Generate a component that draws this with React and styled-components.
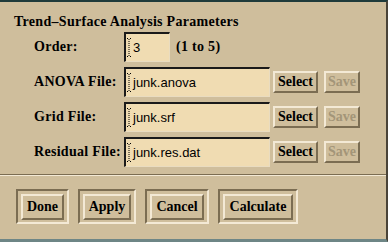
import React from 'react';
import styled, { createGlobalStyle } from 'styled-components';

const GlobalStyle = createGlobalStyle`
  html, body {
    margin: 0;
    padding: 0;
    background: #cfbe9c;
  }
`;

const TAN = '#cfbe9c';
const LIGHT = '#f3e9d5';
const DARK = '#7b6d52';

const Window = styled.div`
  width: 388px;
  height: 242px;
  box-sizing: border-box;
  background: ${TAN};
  border-top: 2px solid #1f3b3b;
  border-right: 2px solid #4a4438;
  border-bottom: 3px solid #6e8686;
  display: flex;
  flex-direction: column;
  font-family: "Liberation Serif", "Times New Roman", serif;
  letter-spacing: 0.3px;
  color: #000;
`;

const Title = styled.div`
  padding: 12px 0 2px 14px;
  height: 16px;
  line-height: 16px;
  font-size: 14px;
  font-weight: bold;
`;

const Rows = styled.div`
  display: flex;
  flex-direction: column;
  gap: 5px;
  padding-left: 34px;
`;

const Row = styled.div`
  display: flex;
  align-items: center;
  height: 30px;
`;

const Label = styled.div`
  width: 90px;
  font-size: 14px;
  font-weight: bold;
  white-space: nowrap;
`;

const Field = styled.div`
  box-sizing: border-box;
  width: ${(p) => p.$width}px;
  height: 30px;
  background: #f0dcb2;
  border-style: solid;
  border-width: 2px 1px 1px 2px;
  border-color: #1a1a1a #e9dcc0 #e9dcc0 #1a1a1a;
  display: flex;
  align-items: center;
  padding-left: 1px;
  font-family: "Liberation Sans", Arial, sans-serif;
  font-size: 13px;
  letter-spacing: 0;
`;

const Caret = styled.svg`
  width: 5px;
  height: 19px;
  margin-right: 1px;
  flex: none;
`;

const Hint = styled.span`
  margin-left: 6px;
  font-size: 14px;
  font-weight: bold;
`;

const SmallButton = styled.div`
  box-sizing: border-box;
  width: ${(p) => p.$width}px;
  height: 22px;
  margin-left: ${(p) => p.$gap}px;
  border: 2px solid;
  border-color: ${LIGHT} ${DARK} ${DARK} ${LIGHT};
  display: flex;
  align-items: center;
  justify-content: center;
  font-size: 14px;
  font-weight: bold;
  letter-spacing: 0;
  color: ${(p) => (p.$disabled ? '#a39578' : '#000')};
`;

const Separator = styled.div`
  margin-top: 7px;
  height: 0;
  border-top: 1px solid ${DARK};
  border-bottom: 1px solid ${LIGHT};
`;

const ButtonBar = styled.div`
  display: flex;
  gap: 9px;
  margin-top: 13px;
  padding-left: 16px;
`;

const Frame = styled.div`
  box-sizing: border-box;
  width: ${(p) => p.$width}px;
  height: 35px;
  border: 2px solid;
  border-color: ${DARK} ${LIGHT} ${LIGHT} ${DARK};
  padding: 3px 3px 2px 3px;
  display: flex;
`;

const Button = styled.div`
  flex: 1;
  box-sizing: border-box;
  border: 2px solid;
  border-color: ${LIGHT} ${DARK} ${DARK} ${LIGHT};
  display: flex;
  align-items: center;
  justify-content: center;
  font-size: 14px;
  font-weight: bold;
  letter-spacing: 0;
`;

const CaretIcon = () => (
  <Caret viewBox="0 0 5 19">
    <path d="M0 0.5h1M3 0.5h1M0 18.5h1M3 18.5h1" stroke="#000" strokeWidth="1" />
    <path d="M2 1v17" stroke="#000" strokeWidth="1" strokeDasharray="1 1" />
  </Caret>
);

const FileRow = ({ label, value }) => (
  <Row>
    <Label>{label}</Label>
    <Field $width={146}>
      <CaretIcon />
      {value}
    </Field>
    <SmallButton $width={45} $gap={3}>Select</SmallButton>
    <SmallButton $width={36} $gap={6} $disabled>Save</SmallButton>
  </Row>
);

const App = () => {
  const files = [
    { label: 'ANOVA File:', value: 'junk.anova' },
    { label: 'Grid File:', value: 'junk.srf' },
    { label: 'Residual File:', value: 'junk.res.dat' },
  ];
  const buttons = [
    { text: 'Done', width: 53 },
    { text: 'Apply', width: 58 },
    { text: 'Cancel', width: 64 },
    { text: 'Calculate', width: 80 },
  ];

  return (
    <>
      <GlobalStyle />
      <Window>
        <Title>Trend–Surface Analysis Parameters</Title>
        <Rows>
          <Row>
            <Label>Order:</Label>
            <Field $width={46}>
              <CaretIcon />
              3
            </Field>
            <Hint>(1 to 5)</Hint>
          </Row>
          {files.map((f) => (
            <FileRow key={f.label} label={f.label} value={f.value} />
          ))}
        </Rows>
        <Separator />
        <ButtonBar>
          {buttons.map((b) => (
            <Frame key={b.text} $width={b.width}>
              <Button>{b.text}</Button>
            </Frame>
          ))}
        </ButtonBar>
      </Window>
    </>
  );
};

export default App;
